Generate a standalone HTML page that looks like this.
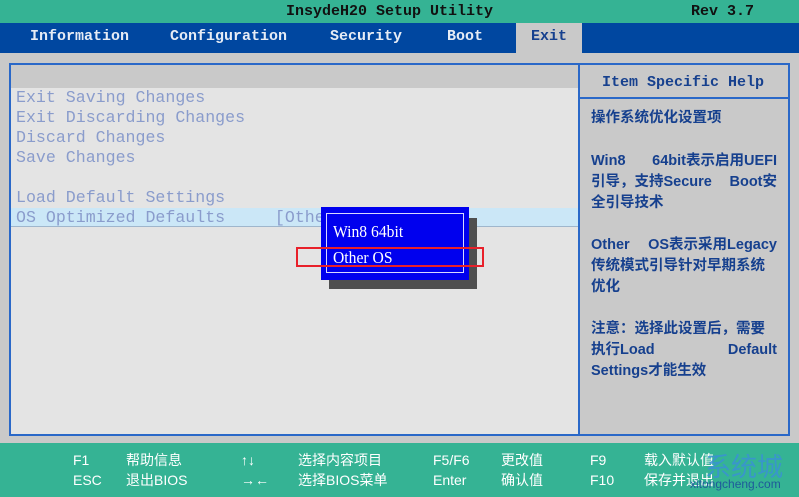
<!DOCTYPE html>
<html><head><meta charset="utf-8"><style>
*{margin:0;padding:0;box-sizing:border-box}
body{width:799px;height:497px;background:#c9c9c9;position:relative;overflow:hidden;font-family:"Liberation Mono",monospace}
.a{position:absolute}
.top{left:0;top:0;width:799px;height:23px;background:#35b394;color:#111;font-weight:bold;font-size:15px}
.nav{left:0;top:23px;width:799px;height:30px;background:#0047a0;color:#e6ecf5;font-weight:bold;font-size:15px}
.nav span{position:absolute;top:5px}
.m{font-size:16.6px;color:#8a9ccc;left:16px;line-height:20px;white-space:pre}
.h{font-family:"Liberation Sans","Noto Sans CJK SC",sans-serif;font-weight:bold;color:#16408e;font-size:14.5px;line-height:21px;left:591px;width:186px;white-space:nowrap}
.h .r{display:flex;justify-content:space-between}
.f{color:#fff;font-family:"Liberation Sans","Noto Sans CJK SC",sans-serif;font-size:14px;line-height:20px;white-space:pre}
</style></head><body>
<div class="a top"><span class="a" style="left:286px;top:3px">InsydeH20 Setup Utility</span><span class="a" style="left:691px;top:3px">Rev 3.7</span></div>
<div class="a nav">
<span style="left:30px">Information</span><span style="left:170px">Configuration</span><span style="left:330px">Security</span><span style="left:447px">Boot</span>
<div class="a" style="left:516px;top:0;width:66px;height:30px;background:#c9c9c9"></div><span style="left:531px;color:#16408e">Exit</span></div>
<div class="a" style="left:9px;top:63px;width:781px;height:373px;border:2px solid #2a68c8;background:#c9c9c9"></div>
<div class="a" style="left:11px;top:88px;width:568px;height:346px;background:#e4e4e4"></div>
<div class="a" style="left:578px;top:65px;width:2px;height:370px;background:#2a68c8"></div>
<div class="a" style="left:580px;top:97px;width:208px;height:2px;background:#2a68c8"></div>
<div class="a" style="left:602px;top:74px;font-weight:bold;font-size:15px;color:#16408e">Item Specific Help</div>
<div class="a" style="left:11px;top:208px;width:567px;height:19px;background:#cbe7f7;border-bottom:1px solid #9fb6cc"></div>
<div class="a m" style="top:88px">Exit Saving Changes
Exit Discarding Changes
Discard Changes
Save Changes

Load Default Settings
OS Optimized Defaults     [Other OS]</div>
<div class="a" style="left:329px;top:218px;width:148px;height:71px;background:#4f4f4f"></div>
<div class="a" style="left:321px;top:207px;width:148px;height:73px;background:#0000ee"></div>
<div class="a" style="left:326px;top:213px;width:138px;height:60px;border:1px solid #d8d8ff"></div>
<div class="a" style="left:333px;top:219px;color:#fff;font-family:'Liberation Serif',serif;font-size:17px;line-height:26px;white-space:pre;transform:scaleX(.92);transform-origin:left">Win8 64bit
Other OS</div>
<div class="a" style="left:296px;top:247px;width:188px;height:20px;border:2px solid #e8202a"></div>
<div class="a h" style="top:108px">操作系统优化设置项</div>
<div class="a h" style="top:151px"><div class="r"><span>Win8</span><span>64bit表示启用UEFI</span></div><div class="r"><span>引导，支持Secure</span><span>Boot安</span></div><div>全引导技术</div></div>
<div class="a h" style="top:235px"><div class="r"><span>Other</span><span>OS表示采用Legacy</span></div><div>传统模式引导针对早期系统</div><div>优化</div></div>
<div class="a h" style="top:319px"><div>注意：选择此设置后，需要</div><div class="r"><span>执行Load</span><span>Default</span></div><div>Settings才能生效</div></div>
<div class="a" style="left:0;top:443px;width:799px;height:54px;background:#35b394"></div>
<div class="a f" style="left:73px;top:450px">F1
ESC</div>
<div class="a f" style="left:126px;top:450px">帮助信息
退出BIOS</div>
<div class="a f" style="left:241px;top:450px">↑↓
→←</div>
<div class="a f" style="left:298px;top:450px">选择内容项目
选择BIOS菜单</div>
<div class="a f" style="left:433px;top:450px">F5/F6
Enter</div>
<div class="a f" style="left:501px;top:450px">更改值
确认值</div>
<div class="a f" style="left:590px;top:450px">F9
F10</div>
<div class="a f" style="left:644px;top:450px">载入默认值
保存并退出</div>
<div class="a" style="left:705px;top:447px;font-family:'Noto Sans CJK SC',sans-serif;font-size:26px;color:#3a8fd8;opacity:.8">系统城</div>
<div class="a" style="left:690px;top:477px;font-family:'Liberation Sans',sans-serif;font-size:12px;color:#1e5a9a">xitongcheng.com</div>
</body></html>
